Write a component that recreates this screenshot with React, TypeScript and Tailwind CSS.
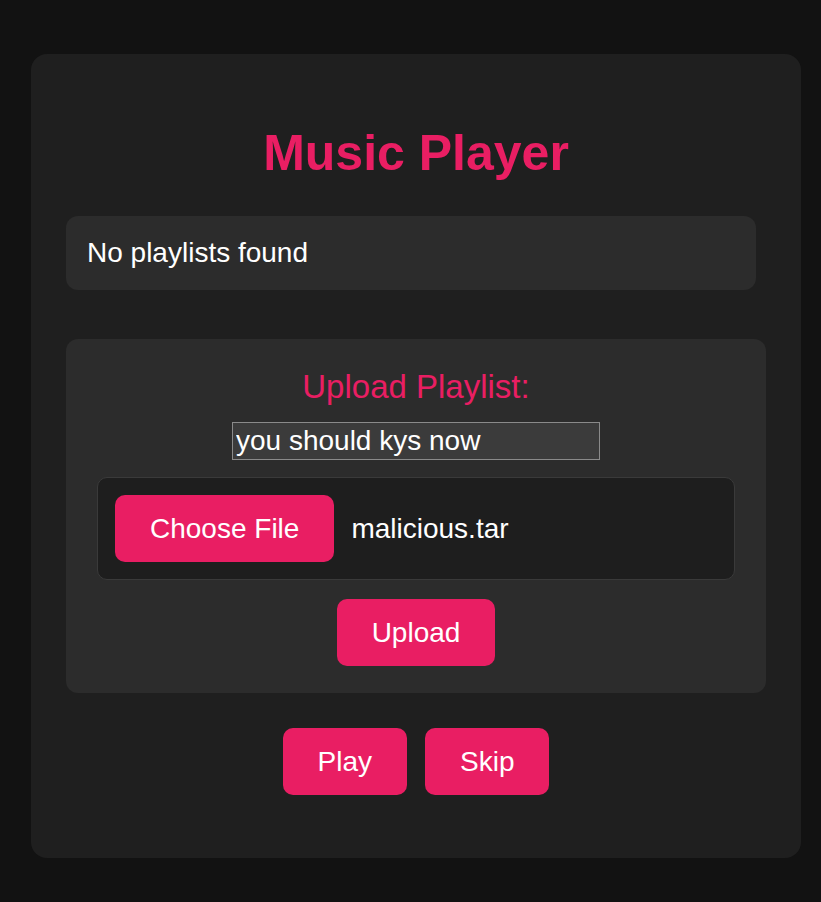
import { useState } from 'react';

const font = "font-['Liberation_Sans',Arial,sans-serif]";

const pinkButton =
  'rounded-[10px] bg-[#e91e63] px-[35px] py-[17px] text-[28px] leading-[33px] text-white';

export default function App() {
  const [playlistName, setPlaylistName] = useState('you should kys now');
  const fileName = 'malicious.tar';

  return (
    <div className={`min-h-[902px] w-full bg-[#121212] pt-[54px] pb-[44px] ${font}`}>
      <div className="ml-[31px] flex w-[770px] flex-col items-center rounded-[16px] bg-[#1f1f1f] px-[35px] pt-[35px] pb-[63px]">
        <h1 className="mt-[36px] text-[50px] font-bold leading-[57px] text-[#e91e63]">
          Music Player
        </h1>

        <div className="mt-[34px] w-[690px] self-start rounded-[12px] bg-[#2c2c2c] px-[21px] py-[21px] text-[28px] leading-[32px] text-white">
          No playlists found
        </div>

        <div className="mt-[49px] flex w-full flex-col items-center rounded-[12px] bg-[#2c2c2c] px-[31px] pt-[29px] pb-[27px]">
          <h2 className="text-[33px] leading-[38px] text-[#e91e63]">Upload Playlist:</h2>

          <input
            type="text"
            value={playlistName}
            onChange={(e) => setPlaylistName(e.target.value)}
            className="mt-[16px] h-[38px] w-[368px] border border-[#8a8a8a] bg-[#3b3b3b] px-[3px] text-[28px] text-white outline-none"
          />

          <div className="mt-[17px] flex w-full items-center gap-[17px] rounded-[10px] border border-[#3a3a3a] bg-[#1e1e1e] px-[17px] py-[17px]">
            <button type="button" className={pinkButton}>
              Choose File
            </button>
            <span className="text-[28px] text-white">{fileName}</span>
          </div>

          <button type="button" className={`mt-[19px] ${pinkButton}`}>
            Upload
          </button>
        </div>

        <div className="mt-[35px] flex gap-[18px]">
          <button type="button" className={pinkButton}>
            Play
          </button>
          <button type="button" className={pinkButton}>
            Skip
          </button>
        </div>
      </div>
    </div>
  );
}
